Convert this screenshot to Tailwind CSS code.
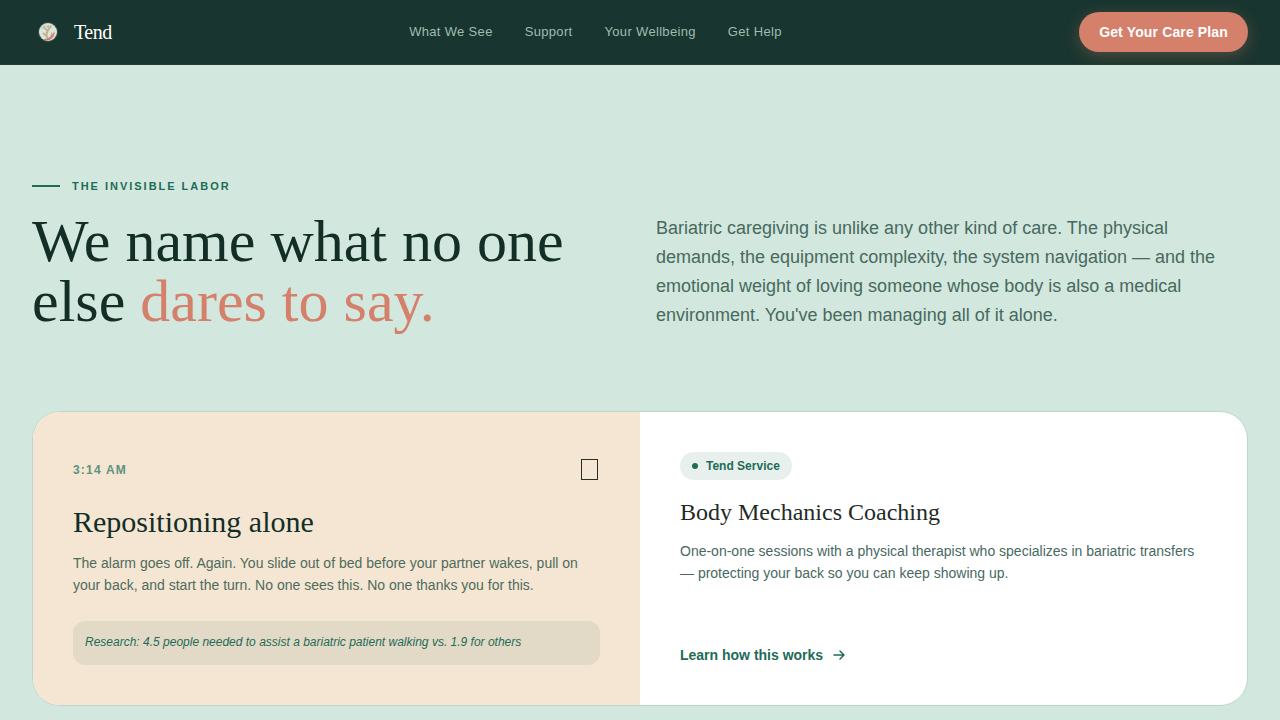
<!DOCTYPE html>
<html lang="en">
<head>
<meta charset="utf-8">
<meta name="viewport" content="width=device-width, initial-scale=1">
<title>Tend</title>
<script src="https://cdn.jsdelivr.net/npm/@tailwindcss/browser@4"></script>
</head>
<body class="min-h-screen bg-[#d2e7dd] font-['Liberation_Sans',Arial,sans-serif] text-[#122e26]">
<header class="flex h-[65px] items-center justify-between overflow-hidden border-b border-[#1e4038] bg-[#19352f] px-8">
  <a href="#" class="flex items-center gap-[10px] text-white">
    <svg class="size-8" viewBox="0 0 32 32" aria-hidden="true">
      <circle cx="16" cy="16" r="10" fill="#315449"/>
      <circle cx="16" cy="16" r="9" fill="#dde5d9"/>
      <path d="M8.500 12c1-2.500 3-4 5.500-4.500l-1 5-3 2z" fill="#c9dccf"/>
      <path d="M15.500 22c-1.500-2.500-1-5 0-7M12 11l3.500 4 3.500-5M11.500 17.500l3.500 3" fill="none" stroke="#bdb193" stroke-width="1.800" stroke-linecap="round"/>
      <circle cx="16" cy="10.500" r="1.300" fill="#c3b595"/>
      <path d="M22.500 15.500c.5 3.500-1.500 7-5 8.500-2.500.8-5 .4-6.500-.8 5 .2 8.500-3.200 11.500-7.700z" fill="#cd7f74"/>
      <path d="M19.500 16.500c.5 2-.5 4-2 5.500" fill="none" stroke="#d9a090" stroke-width="1"/>
    </svg>
    <span class="font-['Liberation_Serif',serif] text-xl tracking-tight">Tend</span>
  </a>
  <nav aria-label="Main" class="flex gap-8 text-[13px] tracking-wide text-[#9dbdb1]">
    <a href="#see">What We See</a>
    <a href="#support">Support</a>
    <a href="#wellbeing">Your Wellbeing</a>
    <a href="#help">Get Help</a>
  </nav>
  <button type="button" class="h-10 rounded-full bg-[#d4806b] px-5 text-sm font-bold tracking-[0.01em] text-white shadow-[0_4px_16px_rgba(212,128,107,0.3)]">Get Your Care Plan</button>
</header>
<main class="px-8 pt-28 pb-[14px]">
  <section class="grid grid-cols-2 items-end gap-8">
    <div>
      <p class="flex items-center gap-3 text-[11px] leading-[18px] font-bold tracking-[0.18em] text-[#1f6b58]"><span class="h-0.5 w-7 bg-[#1f6b58]"></span>THE INVISIBLE LABOR</p>
      <h1 class="mt-4 font-['Liberation_Serif',serif] text-[60px] leading-[60px]">We name what no one<br>else <span class="text-[#d4806b]">dares to say.</span></h1>
    </div>
    <p class="pb-px text-lg leading-[29px] text-[#48695f]">Bariatric caregiving is unlike any other kind of care. The physical demands, the equipment complexity, the system navigation — and the emotional weight of loving someone whose body is also a medical environment. You've been managing all of it alone.</p>
  </section>
  <article id="support" class="mt-20 grid grid-cols-2 overflow-hidden rounded-[28px] border border-[#bdd6ca] bg-white">
    <div class="bg-[#f4e6d3] p-10">
      <div class="flex h-9 items-center justify-between">
        <time class="text-xs font-bold tracking-[0.1em] text-[#5f917f]">3:14 AM</time>
        <svg class="h-6 w-[22px]" viewBox="0 0 22 24" aria-hidden="true"><rect x="3.500" y="1.500" width="16" height="20" fill="none" stroke="#292f28"/></svg>
      </div>
      <h2 class="mt-4 font-['Liberation_Serif',serif] text-3xl leading-9">Repositioning alone</h2>
      <p class="mt-3 text-sm leading-[22px] text-[#4f6b5c]">The alarm goes off. Again. You slide out of bed before your partner wakes, pull on your back, and start the turn. No one sees this. No one thanks you for this.</p>
      <p class="mt-[25px] rounded-xl bg-[#e2dac7] px-3 pt-3 pb-[14px] text-xs leading-[18px] text-[#1f6b58] italic">Research: 4.5 people needed to assist a bariatric patient walking vs. 1.9 for others</p>
    </div>
    <div class="flex flex-col items-start p-10">
      <span class="flex h-7 items-center gap-2 rounded-full bg-[#e8f0ee] px-3 text-xs font-bold text-[#1f6b58]"><span class="size-1.5 rounded-full bg-[#1f6b58]"></span>Tend Service</span>
      <h3 class="mt-4 font-['Liberation_Serif',serif] text-2xl leading-8 text-[#1f2b27]">Body Mechanics Coaching</h3>
      <p class="mt-3 text-sm leading-[22px] text-[#48695f]">One-on-one sessions with a physical therapist who specializes in bariatric transfers — protecting your back so you can keep showing up.</p>
      <a href="#learn" class="mt-auto flex items-center gap-2 text-sm leading-5 font-bold text-[#1f6b58]">Learn how this works
        <svg class="size-4" viewBox="0 0 16 16" fill="none" stroke="currentColor" stroke-width="1.500" stroke-linecap="round" stroke-linejoin="round" aria-hidden="true"><path d="M3 8h10M9 4l4 4-4 4"/></svg>
      </a>
    </div>
  </article>
</main>
</body>
</html>
